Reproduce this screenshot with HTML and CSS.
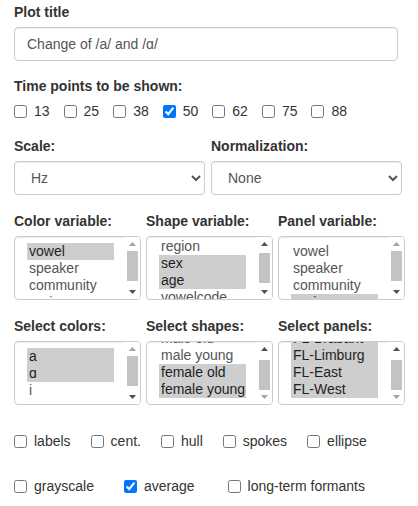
FILE: index.html
```html
<!DOCTYPE html>
<html lang="en">
<head>
<meta charset="utf-8">
<title>Plot options</title>
<link rel="stylesheet" href="styles.css">
</head>
<body>
<div class="panel">
  <div class="group">
    <label class="lbl" for="title">Plot title</label>
    <input id="title" class="ctl title-input" type="text" value="Change of /a/ and /ɑ/">
  </div>

  <div class="group">
    <label class="lbl">Time points to be shown:</label>
    <div class="cb-row tp">
      <label class="cb"><input type="checkbox"><span>13</span></label>
      <label class="cb"><input type="checkbox"><span>25</span></label>
      <label class="cb"><input type="checkbox"><span>38</span></label>
      <label class="cb"><input type="checkbox" checked><span>50</span></label>
      <label class="cb"><input type="checkbox"><span>62</span></label>
      <label class="cb"><input type="checkbox"><span>75</span></label>
      <label class="cb"><input type="checkbox"><span>88</span></label>
    </div>
  </div>

  <div class="group g-sel cols2">
    <div>
      <label class="lbl" for="scale">Scale:</label>
      <select id="scale" class="ctl dd">
        <option selected>Hz</option>
        <option>Bark</option>
        <option>ERB</option>
        <option>Mel</option>
      </select>
    </div>
    <div>
      <label class="lbl" for="norm">Normalization:</label>
      <select id="norm" class="ctl dd">
        <option selected>None</option>
        <option>Lobanov</option>
        <option>Nearey</option>
      </select>
    </div>
  </div>

  <div class="group g-list cols3">
    <div>
      <div class="lbl">Color variable:</div>
      <div class="lb" role="listbox" aria-multiselectable="true" aria-label="Color variable">
        <div class="lb-view">
          <div class="lb-items">
            <div class="opt sel" role="option" aria-selected="true">vowel</div>
            <div class="opt" role="option">speaker</div>
            <div class="opt" role="option">community</div>
            <div class="opt" role="option">region</div>
          </div>
        </div>
        <div class="sb">
          <span class="sb-btn off"><svg width="7" height="4" viewBox="0 0 7 4"><polygon points="0,4 3.5,0 7,4"/></svg></span>
          <span class="sb-track"><span class="sb-thumb"></span></span>
          <span class="sb-btn"><svg width="7" height="4" viewBox="0 0 7 4"><polygon points="0,0 7,0 3.5,4"/></svg></span>
        </div>
      </div>
    </div>
    <div>
      <div class="lbl">Shape variable:</div>
      <div class="lb" role="listbox" aria-multiselectable="true" aria-label="Shape variable">
        <div class="lb-view">
          <div class="lb-items" style="margin-top:-5px">
            <div class="opt" role="option">region</div>
            <div class="opt sel" role="option" aria-selected="true">sex</div>
            <div class="opt sel" role="option" aria-selected="true">age</div>
            <div class="opt" role="option">vowelcode</div>
          </div>
        </div>
        <div class="sb">
          <span class="sb-btn"><svg width="7" height="4" viewBox="0 0 7 4"><polygon points="0,4 3.5,0 7,4"/></svg></span>
          <span class="sb-track"><span class="sb-thumb" style="margin-top:2px"></span></span>
          <span class="sb-btn"><svg width="7" height="4" viewBox="0 0 7 4"><polygon points="0,0 7,0 3.5,4"/></svg></span>
        </div>
      </div>
    </div>
    <div>
      <div class="lbl">Panel variable:</div>
      <div class="lb" role="listbox" aria-multiselectable="true" aria-label="Panel variable">
        <div class="lb-view">
          <div class="lb-items">
            <div class="opt" role="option">vowel</div>
            <div class="opt" role="option">speaker</div>
            <div class="opt" role="option">community</div>
            <div class="opt sel" role="option" aria-selected="true">region</div>
          </div>
        </div>
        <div class="sb">
          <span class="sb-btn off"><svg width="7" height="4" viewBox="0 0 7 4"><polygon points="0,4 3.5,0 7,4"/></svg></span>
          <span class="sb-track"><span class="sb-thumb"></span></span>
          <span class="sb-btn"><svg width="7" height="4" viewBox="0 0 7 4"><polygon points="0,0 7,0 3.5,4"/></svg></span>
        </div>
      </div>
    </div>
  </div>

  <div class="group g-list2 cols3">
    <div>
      <div class="lbl">Select colors:</div>
      <div class="lb" role="listbox" aria-multiselectable="true" aria-label="Select colors">
        <div class="lb-view">
          <div class="lb-items">
            <div class="opt sel" role="option" aria-selected="true">a</div>
            <div class="opt sel" role="option" aria-selected="true">ɑ</div>
            <div class="opt" role="option">i</div>
            <div class="opt" role="option">u</div>
          </div>
        </div>
        <div class="sb">
          <span class="sb-btn off"><svg width="7" height="4" viewBox="0 0 7 4"><polygon points="0,4 3.5,0 7,4"/></svg></span>
          <span class="sb-track"><span class="sb-thumb"></span></span>
          <span class="sb-btn"><svg width="7" height="4" viewBox="0 0 7 4"><polygon points="0,0 7,0 3.5,4"/></svg></span>
        </div>
      </div>
    </div>
    <div>
      <div class="lbl">Select shapes:</div>
      <div class="lb" role="listbox" aria-multiselectable="true" aria-label="Select shapes">
        <div class="lb-view">
          <div class="lb-items" style="margin-top:-18px">
            <div class="opt" role="option">male old</div>
            <div class="opt" role="option">male young</div>
            <div class="opt sel" role="option" aria-selected="true">female old</div>
            <div class="opt sel" role="option" aria-selected="true">female young</div>
          </div>
        </div>
        <div class="sb">
          <span class="sb-btn"><svg width="7" height="4" viewBox="0 0 7 4"><polygon points="0,4 3.5,0 7,4"/></svg></span>
          <span class="sb-track"><span class="sb-thumb" style="margin-top:4px"></span></span>
          <span class="sb-btn off"><svg width="7" height="4" viewBox="0 0 7 4"><polygon points="0,0 7,0 3.5,4"/></svg></span>
        </div>
      </div>
    </div>
    <div>
      <div class="lbl">Select panels:</div>
      <div class="lb" role="listbox" aria-multiselectable="true" aria-label="Select panels">
        <div class="lb-view">
          <div class="lb-items" style="margin-top:-18px">
            <div class="opt sel" role="option" aria-selected="true">FL-Brabant</div>
            <div class="opt sel" role="option" aria-selected="true">FL-Limburg</div>
            <div class="opt sel" role="option" aria-selected="true">FL-East</div>
            <div class="opt sel" role="option" aria-selected="true">FL-West</div>
          </div>
        </div>
        <div class="sb">
          <span class="sb-btn"><svg width="7" height="4" viewBox="0 0 7 4"><polygon points="0,4 3.5,0 7,4"/></svg></span>
          <span class="sb-track"><span class="sb-thumb" style="margin-top:4px"></span></span>
          <span class="sb-btn off"><svg width="7" height="4" viewBox="0 0 7 4"><polygon points="0,0 7,0 3.5,4"/></svg></span>
        </div>
      </div>
    </div>
  </div>

  <div class="cb-row opts1">
    <label class="cb"><input type="checkbox"><span>labels</span></label>
    <label class="cb"><input type="checkbox"><span>cent.</span></label>
    <label class="cb"><input type="checkbox"><span>hull</span></label>
    <label class="cb"><input type="checkbox"><span>spokes</span></label>
    <label class="cb"><input type="checkbox"><span>ellipse</span></label>
  </div>

  <div class="cb-row opts2">
    <label class="cb"><input type="checkbox"><span>grayscale</span></label>
    <label class="cb"><input type="checkbox" checked><span>average</span></label>
    <label class="cb cb-far"><input type="checkbox"><span>long-term formants</span></label>
  </div>
</div>
</body>
</html>
```

FILE: styles.css
```css
html, body {
  margin: 0;
  padding: 0;
  background: #fff;
}

body {
  font-family: "Liberation Sans", Arial, Helvetica, sans-serif;
  font-size: 14px;
  line-height: 20px;
  color: #333;
}

.panel {
  padding: 2px 0 0 14px;
}

.group {
  margin-bottom: 15px;
}

.g-sel,
.g-list {
  margin-bottom: 16px;
}

.g-list2 {
  margin-bottom: 0;
}

.lbl {
  display: block;
  font-weight: 700;
  line-height: 20px;
  margin-bottom: 5px;
}

.ctl {
  box-sizing: border-box;
  font-family: inherit;
  font-size: 14px;
  color: #555;
  background-color: #fff;
  border: 1px solid #ccc;
  border-radius: 4px;
  box-shadow: inset 0 1px 1px rgba(0, 0, 0, 0.075);
  padding: 6px 12px;
  margin: 0;
  display: block;
}

.title-input {
  width: 384px;
  height: 34px;
  line-height: 20px;
}

.dd {
  width: 191px;
  height: 34px;
}

/* listbox */
.lb {
  box-sizing: border-box;
  width: 127px;
  height: 64px;
  border: 1px solid #ccc;
  border-radius: 4px;
  box-shadow: inset 0 1px 1px rgba(0, 0, 0, 0.075);
  background: #fff;
  display: flex;
  overflow: hidden;
}

.lb-view {
  flex: 1;
  min-width: 0;
  overflow: hidden;
  padding: 6px 11px 6px 12px;
}

.opt {
  height: 16px;
  line-height: 16px;
  padding: 0 2px 1px;
  color: #555;
  white-space: nowrap;
  overflow: hidden;
}

.opt.sel {
  background: #cecece;
  color: #1f1f1f;
}

.sb {
  flex: none;
  width: 15px;
  display: flex;
  flex-direction: column;
  background: #fff;
}

.sb-btn {
  height: 14px;
  flex: none;
  display: flex;
  align-items: center;
  justify-content: center;
}

.sb-btn svg {
  display: block;
  fill: #505050;
}

.sb-btn.off svg {
  fill: #a3a3a3;
}

.sb-track {
  flex: 1;
  padding: 0 2px;
}

.sb-thumb {
  display: block;
  height: 30px;
  background: #c3c3c3;
}

.cols2 {
  display: grid;
  grid-template-columns: 191px 191px;
  column-gap: 6px;
}

.cols3 {
  display: grid;
  grid-template-columns: 127px 127px 127px;
  column-gap: 5px;
}

.cb-row {
  display: flex;
  align-items: center;
  height: 20px;
}

.cb {
  display: flex;
  align-items: center;
  gap: 7px;
  font-weight: 400;
  white-space: nowrap;
}

.cb input {
  width: 13px;
  height: 13px;
  margin: 0;
  flex: none;
}

.tp {
  gap: 14px;
}

.opts1 {
  margin-top: 26px;
  gap: 20px;
}

.opts2 {
  margin-top: 25px;
  gap: 30px;
}

.cb-far {
  margin-left: 3px;
}
```
